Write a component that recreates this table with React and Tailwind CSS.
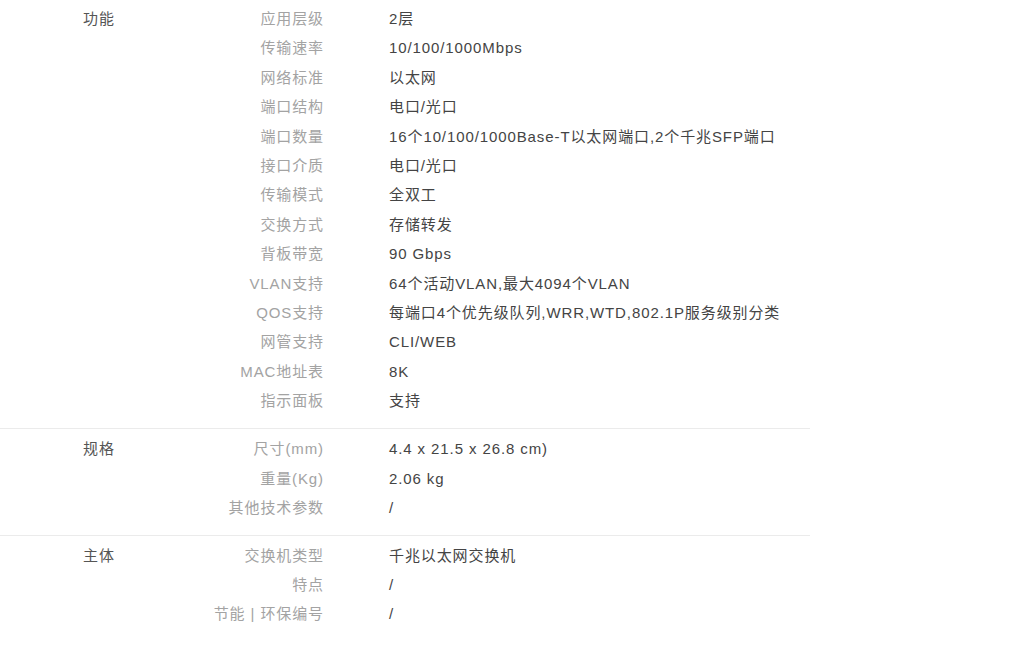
const sections = [
  {
    title: '功能',
    rows: [
      ['应用层级', '2层'],
      ['传输速率', '10/100/1000Mbps'],
      ['网络标准', '以太网'],
      ['端口结构', '电口/光口'],
      ['端口数量', '16个10/100/1000Base-T以太网端口,2个千兆SFP端口'],
      ['接口介质', '电口/光口'],
      ['传输模式', '全双工'],
      ['交换方式', '存储转发'],
      ['背板带宽', '90 Gbps'],
      ['VLAN支持', '64个活动VLAN,最大4094个VLAN'],
      ['QOS支持', '每端口4个优先级队列,WRR,WTD,802.1P服务级别分类'],
      ['网管支持', 'CLI/WEB'],
      ['MAC地址表', '8K'],
      ['指示面板', '支持'],
    ],
  },
  {
    title: '规格',
    rows: [
      ['尺寸(mm)', '4.4 x 21.5 x 26.8 cm)'],
      ['重量(Kg)', '2.06 kg'],
      ['其他技术参数', '/'],
    ],
  },
  {
    title: '主体',
    rows: [
      ['交换机类型', '千兆以太网交换机'],
      ['特点', '/'],
      ['节能 | 环保编号', '/'],
    ],
  },
]

export default function App() {
  return (
    <div
      className="w-[1012px] h-[667px] bg-white overflow-hidden text-[15px] tracking-[0.9px]"
      style={{ fontFamily: '"Liberation Sans", "Noto Sans CJK SC", sans-serif' }}
    >
      <div className="w-[810px]">
        {sections.map((s, i) => (
          <div
            key={s.title}
            className={`flex ${i === 0 ? 'pt-[4px] pb-[13px]' : 'pt-[5px] pb-[12px] border-t border-[#ebebeb]'}`}
          >
            <div className="w-[203px] pl-[83px] h-[29.4px] leading-[29.4px] text-[#555]">
              {s.title}
            </div>
            <div className="flex-1">
              {s.rows.map(([label, value]) => (
                <div key={label} className="flex h-[29.4px] leading-[29.4px]">
                  <div className="w-[121px] text-right text-[#a3a3a3] whitespace-pre">
                    {label}
                  </div>
                  <div className="ml-[65px] text-[#444] whitespace-nowrap">
                    {value}
                  </div>
                </div>
              ))}
            </div>
          </div>
        ))}
      </div>
    </div>
  )
}
